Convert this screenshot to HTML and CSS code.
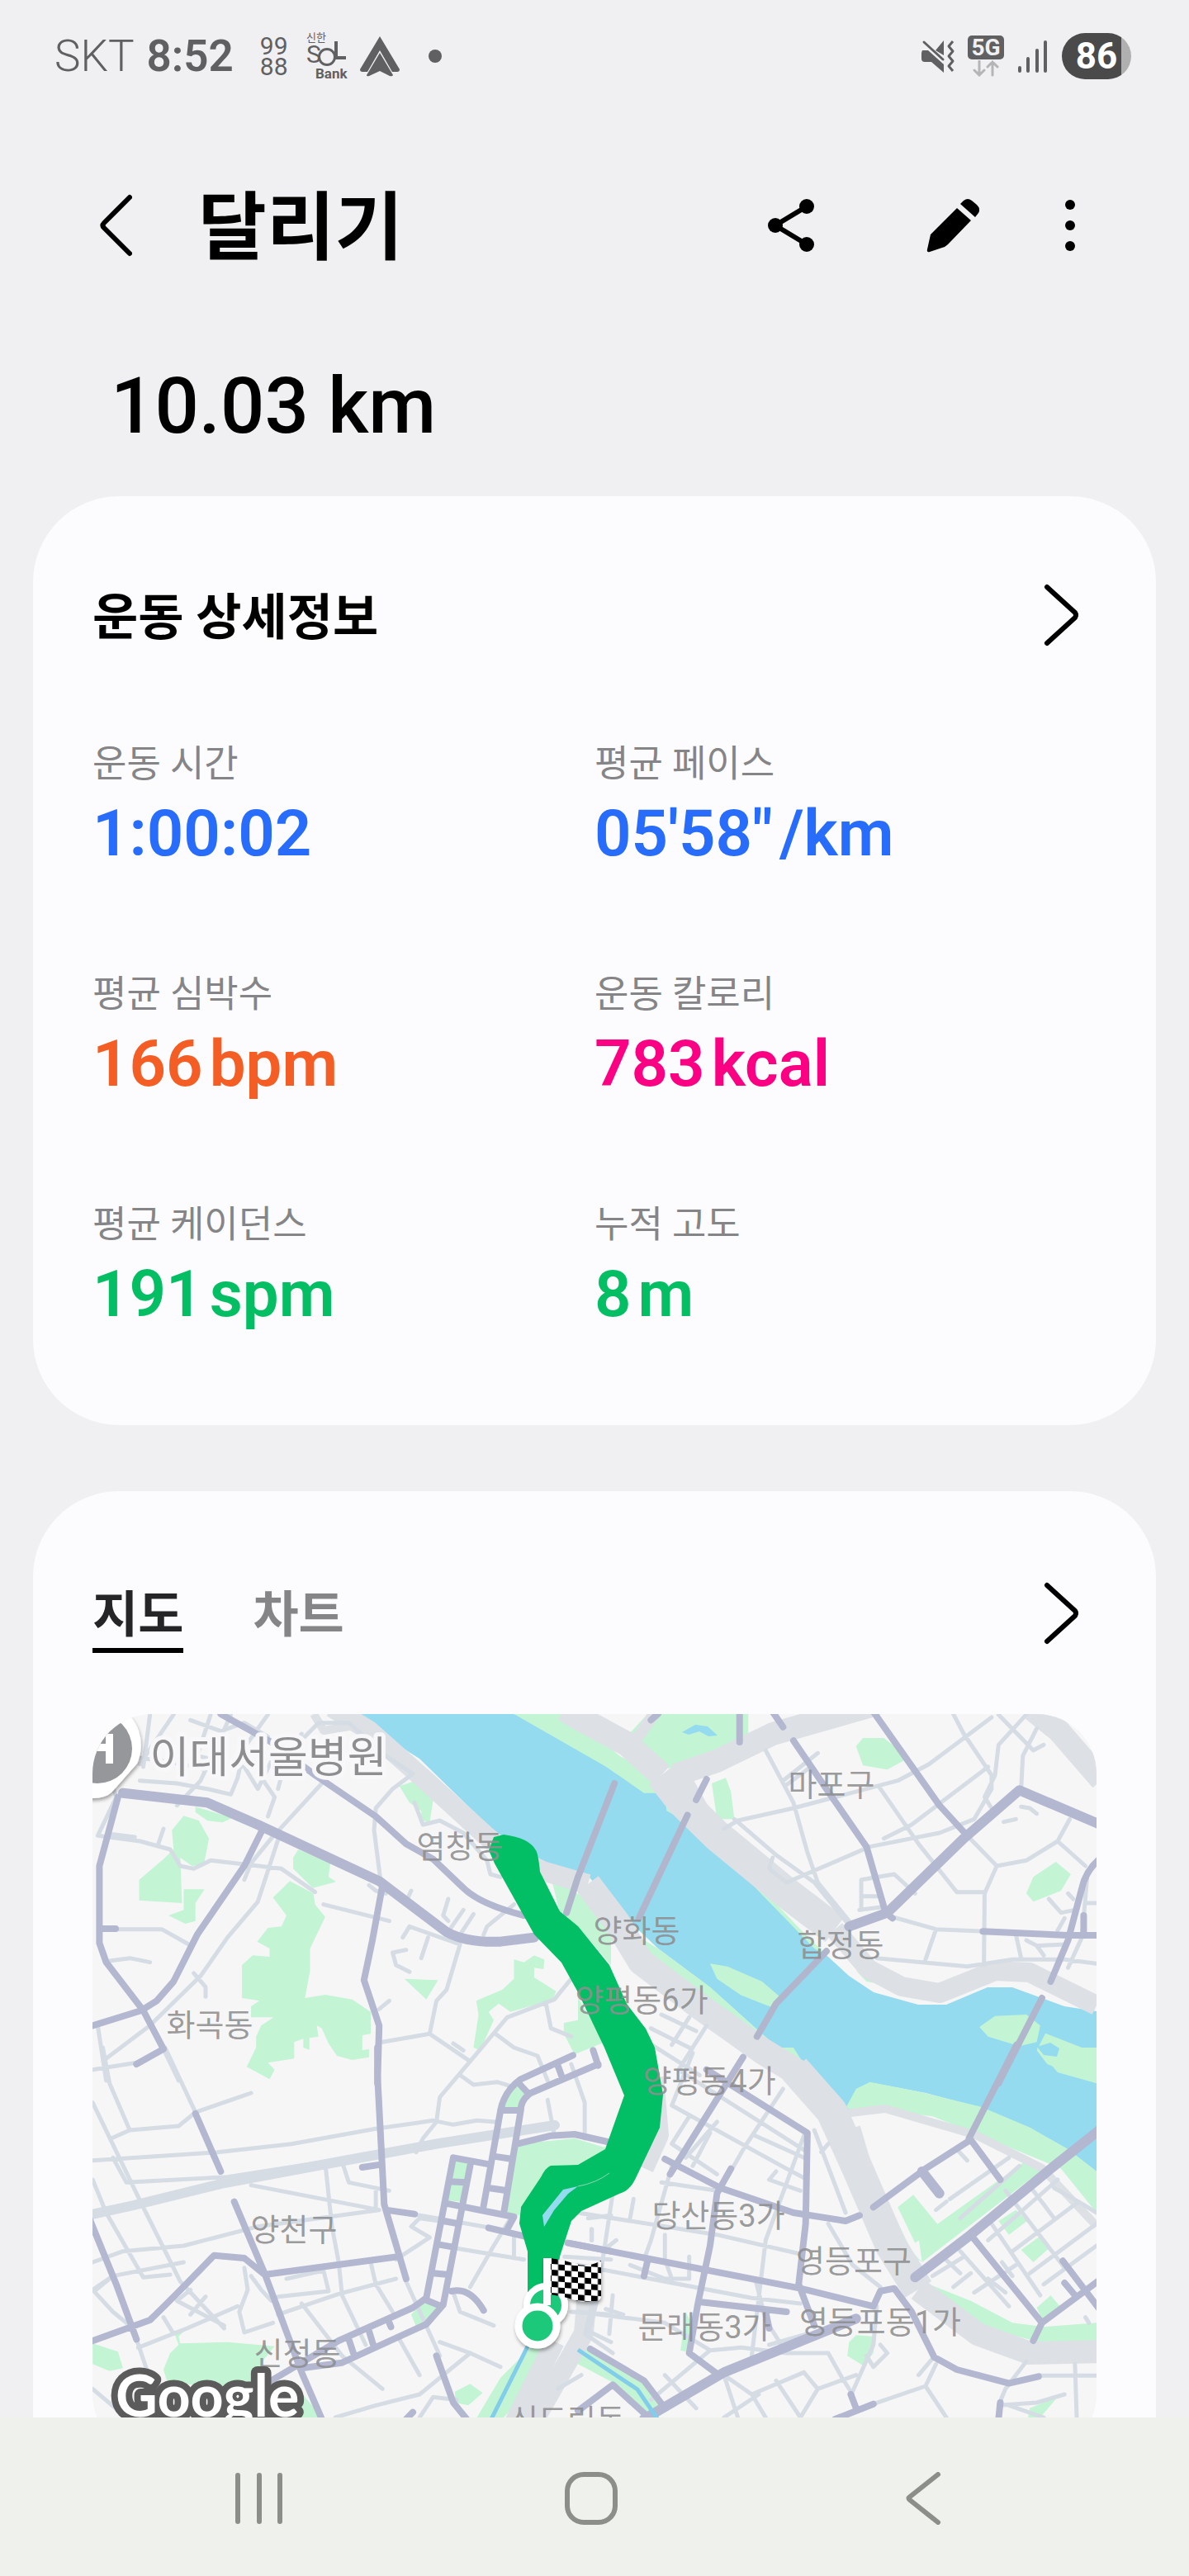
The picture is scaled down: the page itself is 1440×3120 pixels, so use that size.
FILE: index.html
```html
<!DOCTYPE html>
<html lang="ko">
<head>
<meta charset="utf-8">
<meta name="viewport" content="width=device-width, initial-scale=1">
<title>달리기</title>
<link rel="stylesheet" href="styles.css">
</head>
<body>
<div class="status">
  <div class="status-left">
    <span class="carrier">SKT</span>
    <span class="clock">8:52</span>
    <span class="app-9988"><span>99</span><span>88</span></span>
    <svg class="app-sol" width="54" height="64" viewBox="0 -2 54 64" aria-label="신한 SOL Bank">
      <text x="0" y="12" font-size="13">신한</text>
      <text x="0" y="38" font-size="30">S</text>
      <circle cx="25" cy="31" r="9.500" fill="none" stroke="currentColor" stroke-width="3"/>
      <path d="M36 12V32H48" fill="none" stroke="currentColor" stroke-width="4"/>
      <text x="11" y="57" font-size="17" font-weight="700">Bank</text>
    </svg>
    <svg class="app-nav" width="50" height="50" viewBox="0 0 50 50"><path d="M25 1 49 41Q49 44 46 44H40L25 18 10 44H4Q1 44 1 41Z" fill="currentColor"/><path d="M25 21 41 48Q40 50 37 49L25 43 12 49Q9 50 9 48Z" fill="currentColor"/></svg>
    <span class="dot"></span>
  </div>
  <div class="status-right">
    <svg width="40" height="40" viewBox="0 0 40 40"><path d="M1 13H8L27 30V40L12 27H4Q0 27 0 23V16ZM17 13 27 1V19Z" fill="currentColor"/><path d="M3 3 29 27" stroke="#f0f0f2" stroke-width="4"/><path d="M3 3 26 24" stroke="currentColor" stroke-width="3" stroke-linecap="round"/><path d="M38 2 33 8 38 14 33 20 38 26 33 32 38 38" fill="none" stroke="currentColor" stroke-width="3" stroke-linejoin="round"/></svg>
    <span class="network"><span class="network-tag">5G</span>
      <svg width="32" height="20" viewBox="0 0 32 20" fill="none" stroke="#b5b5b7" stroke-width="3" stroke-linecap="round"><path d="M8 1V18M2 12 8 18 14 12M24 18V2M18 8 24 2 30 8"/></svg></span>
    <svg width="38" height="40" viewBox="0 0 38 40" stroke="currentColor" stroke-width="4" stroke-linecap="round"><path d="M3 34V38M13 23V38M24 13V38M34 3V38"/></svg>
    <span class="battery">86</span>
  </div>
</div>

<header class="header">
  <button class="icon-button" aria-label="뒤로"><svg width="40" height="76" viewBox="0 0 40 76"><path d="M37 4 6 35Q3 38 6 41L37 72" class="line"/></svg></button>
  <h1>달리기</h1>
  <button class="icon-button share" aria-label="공유"><svg width="64" height="68" viewBox="0 0 64 68"><path d="M51 11 13 34 51 57" fill="none" stroke="#000" stroke-width="6"/><circle cx="51" cy="11" r="9"/><circle cx="13" cy="34" r="9"/><circle cx="51" cy="57" r="9"/></svg></button>
  <button class="icon-button edit" aria-label="편집"><svg width="64" height="68" viewBox="0 0 64 68"><path d="M37 13 54 28 26 57Q23 60 19 61L4 66Q0 67 1 63L5 45ZM41 8 45 4Q50 0 55 4L61 9Q66 14 63 19L59 24Z"/></svg></button>
  <button class="icon-button more" aria-label="더보기"><svg width="64" height="68" viewBox="0 0 64 68"><circle cx="32" cy="9" r="6"/><circle cx="32" cy="34" r="6"/><circle cx="32" cy="59" r="6"/></svg></button>
</header>

<main>
  <p class="distance">10.03 km</p>
  <section class="card details">
    <div class="card-head">
      <h2>운동 상세정보</h2>
      <button class="icon-button" aria-label="운동 상세정보 보기"><svg width="44" height="76" viewBox="0 0 44 76"><path d="M4 4 38 35Q40 38 38 41L4 72" class="line"/></svg></button>
    </div>
    <dl class="stats">
      <div><dt>운동 시간</dt><dd class="blue">1:00:02</dd></div>
      <div><dt>평균 페이스</dt><dd class="blue">05'58"<span class="unit">/km</span></dd></div>
      <div><dt>평균 심박수</dt><dd class="orange">166<span class="unit">bpm</span></dd></div>
      <div><dt>운동 칼로리</dt><dd class="pink">783<span class="unit">kcal</span></dd></div>
      <div><dt>평균 케이던스</dt><dd class="green">191<span class="unit">spm</span></dd></div>
      <div><dt>누적 고도</dt><dd class="green">8<span class="unit">m</span></dd></div>
    </dl>
  </section>

  <section class="card map-card">
    <div class="card-head">
      <div class="tabs" role="tablist">
        <button role="tab" aria-selected="true">지도</button>
        <button role="tab" aria-selected="false">차트</button>
      </div>
      <button class="icon-button" aria-label="지도 보기"><svg width="44" height="76" viewBox="0 0 44 76"><path d="M4 4 38 35Q40 38 38 41L4 72" class="line"/></svg></button>
    </div>
    <svg class="map" viewBox="0 0 1216 896" role="img" aria-label="달리기 경로 지도">
      <defs>
        <pattern id="checks" width="16" height="14" patternUnits="userSpaceOnUse" patternTransform="translate(556 659) skewY(4)"><rect width="16" height="14" fill="#fff"/><path d="M0 0H8V14H16V7H0Z" fill="#000"/></pattern>
        <filter id="shadow" x="-30%" y="-30%" width="160%" height="160%"><feDropShadow dx="1" dy="3" stdDeviation="2" flood-opacity=".35"/></filter>
      </defs>
      <rect width="1216" height="896" fill="#f6f6f7"/>
      <!-- Han river -->
      <path class="water" d="M310 0 396 54 478 134 539 181 601 197 643 244 685 284 748 331 807 384 878 447 916 480 946 447 1009 459 1076 477 1135 501 1181 527 1216 554V360L1177 354 1114 331H1084L1034 352H1000L946 337 916 317 891 294 857 264 790 197 714 131 693 97 634 72 588 39 560 15 510 0Z"/>
      <!-- parks -->
      <g class="park">
        <g transform="translate(-12 -16) scale(.40816 .33333)">
          <path d="M1280 48 1568 250V130L1460 48ZM940 310 1010 282 1045 325 1030 440 1005 435V400L970 370ZM335 385 445 425 415 442 370 435 335 405ZM300 418 345 435 375 500 360 595 325 600 290 570 295 735 168 725V650L240 575 270 540 265 470ZM300 685H362L335 735V800L305 810 255 780 300 760ZM640 540 735 590 730 640 752 658 683 680 625 610V570ZM615 655 685 700 690 740 720 785 675 900 675 980 660 1080 720 1068 800 1085 855 1130V1210L830 1215V1270L850 1265V1295L800 1305 755 1290 730 1245 710 1190 695 1180 700 1220 673 1225V1268L655 1260 655 1228 628 1240V1300L550 1315 570 1340 555 1375 487 1330 515 1260V1220L530 1180 567 1150 500 1150V1110L525 1090 473 1080V960L505 925 555 930V900L518 875 550 825 590 820 605 780 565 715ZM955 1010 1055 1015 1020 1085ZM1280 940 1310 950 1340 925 1370 940 1368 975 1340 970V1005L1405 1055 1395 1085 1270 1130 1235 1100 1205 1130 1220 1160 1180 1270 1160 1260 1175 1140 1168 1090 1245 1050 1280 1010ZM1390 640 1460 690 1568 840V960L1490 850 1415 765ZM1470 1080 1550 1240 1460 1285 1428 1210V1170L1470 1160Z"/>
        </g>
        <g transform="translate(588 -16) scale(.42092 .33333)">
          <path d="M-20 50 0 65 140 130 200 48H490V140L400 190 340 240 250 245 190 180 150 130 0 80V165L110 265 190 335 250 335 260 300 120 200ZM385 300 425 280 440 330 450 430 400 430ZM800 165 820 135H880L910 165 940 215 890 250 820 235ZM250 340 350 450 640 830 720 930 680 900 480 640 300 430 255 400ZM0 700 100 800 230 900 380 1040 520 1200 690 1380H650L450 1180 200 950 0 800ZM380 955 430 965 530 1020 585 1080 570 1120 470 1070 400 1010ZM1155 1185 1200 1145 1290 1140 1330 1180 1320 1240 1270 1255 1180 1220ZM1345 1208 1450 1260 1492 1300V1390L1350 1320 1320 1270ZM0 1120 60 1230 0 1270ZM1290 700 1310 640 1375 585 1418 630 1390 690 1310 730ZM800 980 870 1030 830 1020Z"/>
        </g>
        <g transform="translate(-12 404) scale(.40816 .33333)">
          <path d="M1280 130 1318 175 1295 230 1248 225ZM1095 410 1145 420 1125 560 1080 555ZM1290 350 1460 330 1568 370 1470 425 1390 430 1300 580 1297 610 1250 600ZM1015 920 1060 945 1010 1010 990 1015 975 970ZM30 1075 105 1105 120 1165 80 1175 30 1150ZM240 1170 260 1110 285 1080 270 1030 310 1020 285 1050 290 1075 430 1070 570 1085 540 1130 520 1180 560 1210 500 1240 400 1240 250 1210ZM640 1240 710 1344H600ZM1105 1250 1150 1222 1187 1255 1145 1300 1105 1290ZM1240 1200 1330 1090 1400 1090 1310 1260 1250 1344H1170Z"/>
        </g>
        <g transform="translate(588 404) scale(.42092 .33333)">
          <path d="M570 0H620L690 140 770 220 800 150 840 125 980 160 1160 215 1300 290 1410 370 1492 450V600L1390 440 1180 330 1020 250 860 225 800 240 700 160ZM1320 0 1400 30 1440 0H1492V130L1380 90ZM808 355 850 450 960 740 990 780 950 750 880 620 830 530ZM920 580 965 535 1040 650 970 710ZM980 690 1290 410 1340 440 990 780ZM1210 630 1260 590 1292 630 1240 680ZM1275 735 1330 685 1355 730 1310 780ZM990 850 1130 920 1250 1000 1340 1015 1492 1000V1075L1340 1075 1180 1020 1040 930ZM1320 945 1360 900 1390 945 1340 1000ZM780 1070 800 1045 855 1050 850 1110 820 1155 775 1120ZM310 960 330 1010 310 1105 295 1100ZM0 1080 40 1100 190 1220 245 1310 200 1330 120 1230 0 1150ZM1380 1270 1330 1344H1295L1300 1310ZM0 340 45 380 0 400Z"/>
        </g>
      </g>
      <path class="water" d="M714 22 730 13 745 15 757 26 746 27 735 21 722 25ZM1144 403 1160 398 1171 405 1168 415 1152 413Z"/>
      <!-- expressways -->
      <g class="express">
        <path stroke-width="30" d="M572-6 588 4 647 36 689 74"/>
        <path stroke-width="38" d="M689 74 714 106 756 147 841 217 899 261"/>
        <path stroke-width="24" d="M899 261 940 309 980 330 1026 338 1093 311 1135 313 1216 353"/>
        <path stroke-width="28" d="M706 74 756 57 824 24 950-12"/>
        <path stroke-width="14" d="M655 36 680 0M720 80 748 130"/>
        <path stroke-width="24" d="M290-8 335 20 404 81 498 167 545 190 600 206"/>
        <path stroke-width="32" d="M600 206 635 252 664 300 735 354 811 408 860 438"/>
        <path stroke-width="38" d="M850 430 895 481 925 547 967 644 1000 697"/>
        <path stroke-width="28" d="M1000 697 1072 751 1135 774 1230 772M1135-8 1170 20 1222 80"/>
        <path stroke-width="24" d="M680 440 686 510 668 550M600 690 595 750 510 900M560 760 490 900"/>
        <path stroke-width="10" d="M902 485 960 478 1070 510 1150 550 1216 620M925 500 960 620 1003 680M268 0 280 20 330 12"/>
      </g>
      <path d="M642 312 670 331 720 370 760 410 775 440 700 420 660 390Z" fill="#f6f6f7"/>
      <!-- streets -->
      <g class="street">
        <g transform="translate(-12 -16) scale(.40816 .33333)">
          <path d="M60 200 100 350 45 490 170 510 260 540 290 600 330 610 380 580 590 610 690 695M200 50 180 240M270 50 170 230M320 70 410 110 480 80 550 130M380 50 340 200 480 240 520 320 580 170M440 50 400 160 350 290 280 380M550 50 480 170 460 280 440 340 370 320 280 300 170 290M130 200 300 230 360 250M520 260 570 350 550 420M710 300 560 500 500 590 480 650M650 120 600 230 580 320M660 130 700 80 790 80 900 200 980 265 920 320 870 390 865 470 885 660M580 505 520 730 430 860 350 1000 200 1180 70 1300M985 370 1010 450 1060 435 1130 480 1200 580 1210 630 1240 640M715 740 910 800M80 945 140 935 200 950M100 830H235L315 885M330 990 365 1040V1075M240 465 225 520M90 485 155 495M1085 720 1070 780 1085 800M1130 760 1090 830M1160 775 1120 850M950 860 970 820 1120 885 1080 1050 1050 1090 1030 1210 890 1240M1025 860 1005 935M960 905 920 915 930 960 970 985M1190 850 1200 820 1280 740M910 1090 880 1120M1030 1210 1150 1310 1260 1150 1400 1085 1450 1010M1100 1245 1130 1270M1225 1210 1280 1260 1350 1290 1380 1380M1375 1100 1390 1190 1450 1220M45 1180 70 1380M240 1265 285 1380M30 1340 160 1315M850 670 870 690 900 700M975 690 960 730"/>
        </g>
        <g transform="translate(588 -16) scale(.42092 .33333)">
          <path d="M540 180 620 370 660 550 690 660 780 800M590 290 690 190M600 305 670 240M420 465 460 435 620 390 920 290 1010 230 1190 60M450 430 570 560 680 660 770 800M560 570 550 610 600 660 840 530 1040 480 1140 430 1190 320V270L1110 120 1080 48M880 500 960 450 1180 240M865 310 980 520 1090 695H1170M1210 50 1310 180 1340 160M1290 50 1210 160 1200 270 1170 350 1190 390M1320 100 1280 200 1275 320M1120 490 1205 600 1290 580 1380 510 1415 430M1380 510 1460 600M1205 600 1170 700 1168 960M815 760V650L910 630 970 700M820 710H870M810 760 870 750M890 780 1030 830 1170 838M1030 830 1000 940M860 935 1120 965 1250 940 1400 940 1492 955M1260 850 1275 935M1290 870 1320 890 1400 885M1320 890 1340 925M1400 790 1380 835M1355 720 1390 770 1430 760M1465 640 1450 860 1410 970M1225 440 1260 430M1275 385 1300 390 1320 410M1460 735H1492M1410 700 1425 720M210 1190 320 1260M240 1140 340 1200M370 1180 290 1340M200 1240 350 1360M320 1150 270 1250"/>
        </g>
        <g transform="translate(-12 404) scale(.40816 .33333)">
          <path d="M60 0 80 130 140 300 85 330M30 200 180 580 290 850 420 1020M30 480 70 600 180 835 260 825M30 410 400 380 620 350 870 295 1040 265 1100 280 1170 265 1225 270M90 400 130 490 430 470 720 415H770L790 490 910 520M335 235 500 165M140 300 285 285 335 235M245 0 335 235M720 420 740 650 760 780M500 500 880 590M30 780 120 740 300 720 520 650 880 590M1150 50 1060 180 1050 270 1010 330 990 380M1120 100 1160 135 1230 125 1270 140M870 510V590M980 605 1210 655M30 880 90 830 300 780M30 880 90 960 130 1000M40 880 80 840M165 1090 310 1020 460 940M480 800 490 880 465 960 480 1035 565 1000M500 830 530 880 560 920M580 905 730 885 715 810 605 840M650 930 770 1120 890 1240M580 970 760 895 930 840M760 780 770 900 840 1080M855 780 870 860 920 960M930 770 1030 690 975 650 1000 620 1120 640M1110 730 1310 770M1270 620 1220 720 1150 870M1280 690V765M240 980 270 1040M320 880 280 920 420 1010M365 905 320 970M160 1060 210 1240M960 850 1060 1120M1150 1110 1000 1260 870 1300 750 1344M1060 1070 1150 1110 1240 1160M940 1060 1000 1190M1000 1344 1040 1270 1110 1280M30 1240 130 1344M1380 190 1400 320M1450 60 1490 200V330M1500 620 1568 610M1430 760 1568 770M1450 960 1568 970M1510 660V700M1500 1050 1530 900M1500 1030 1568 1070M1100 890 1120 960 1220 1010M1410 1240 1480 1190"/>
        </g>
        <g transform="translate(588 404) scale(.42092 .33333)">
          <path d="M270 210 600 440 660 480M300 90 660 380M590 150 480 360 430 470M510 320 650 400M330 20 270 210M320 250 270 350 400 460M380 310 330 430M650 320 540 700 500 1120M680 300 770 600M700 380 720 350M400 270 310 400M570 450 550 480 640 520M240 490 400 520M270 430 210 700 190 770M160 550 150 620M40 660V700M0 600 400 680 640 750M100 530 70 780 20 1040 100 1110M0 790 500 910 640 930M70 740 110 700M150 790 250 840H320V760M0 960 250 1000 380 1100 470 1090 600 1110M100 900 90 1040M80 950 130 970M250 680V770L270 840M510 840 540 990 600 1110 720 1110 760 1200 790 1260M720 640 790 790 870 870M650 1180 690 1240 800 1190M650 1180 500 1260 420 1190M570 1210 640 1344M690 1240 640 1344M500 1260 540 1344M860 940 850 1080 790 1250M870 1080 890 1110 850 1160 830 1120M550 1080 660 1040M380 1100 210 1280M250 1190 340 1310M420 1190 460 1344M420 1344 520 1260M850 1295 1000 1230 1060 1344M1000 1230 1030 1150M1020 1130 980 1190M1290 1140 1230 1240 1210 1300 1320 1290 1400 1260M1430 1150 1435 1344M1325 1192H1492M1240 1300 1340 1344M1070 550 1240 400M1100 620 1270 430M1030 590 1060 560M1180 700 1380 480M1250 740 1440 560 1492 600M1300 820 1492 640M1340 860 1492 720M1140 890 1260 790M1080 870 1130 820M1100 740 1240 940M1020 830 1110 760M1230 520 1400 800M1310 520 1370 620M1370 510 1440 560M1190 640 1330 900M1050 760 1100 820M1180 840 1230 890M1220 780 1250 830M1090 370 1120 410M1460 980 1470 1000"/>
        </g>
      </g>
      <g class="boulevard">
        <path d="M-10 608 50 595 160 568 310 540 420 520 560 498"/>
      </g>
      <!-- main roads -->
      <g class="road">
        <g transform="translate(588 -16) scale(.42092 .33333)" class="bridge">
          <path d="M105 300 0 640-33 770M315 415 175 790M715 910 570 1100 515 1220M1335 1080 1210 1390"/>
        </g>
        <g transform="translate(-12 -16) scale(.40816 .33333)">
          <path d="M410 48 560 150 690 270 870 420 960 520 1040 575 1130 680Q1180 740 1310 780M105 350 50 600V880L70 950 180 1125 240 1265 160 1320M890 670 860 870 835 1015 880 1180 875 1390M535 465 480 600 340 850 270 1020 220 1090 175 1125 30 1180M60 828H98"/>
          <path class="wide" d="M120 335 370 370 520 450 880 655 1080 840Q1140 880 1240 875L1340 860"/>
        </g>
        <g transform="translate(588 -16) scale(.42092 .33333)">
          <path d="M560 40 590 95M620 145 720 330 830 530 885 770 905 790M850 40 1040 380 1120 490M1165 838 1410 852H1500M1500 575Q1460 620 1450 680L1410 870 1360 1020M1455 780V850M465 40V150M370 285 340 360M230 48 210 70"/>
          <path class="wide" d="M780 820 890 770 1110 500 1270 325 1500 448"/>
        </g>
        <g transform="translate(-12 404) scale(.40816 .33333)">
          <path d="M335 240 410 450M450 560 540 820 650 1180 710 1350M875 0 875 100 895 570 960 840M830 435 885 425M900 590 985 605M20 620 100 860 160 1060M20 1070 200 990Q260 920 390 755L480 765 540 825 935 760M1455 28 1300 115Q1250 160 1240 230L1190 575M1530 60 1330 165Q1300 190 1300 230L1250 600M1240 228H1300M1220 395 1275 405M1205 510 1260 520M1410 65 1425 115M1515 10 1530 65M1290 350 1390 320 1460 315 1568 345M1210 425 1100 400 1020 910 980 945 760 1065 560 1210M1150 430 1070 935 1020 1005 770 1145 650 1165M1090 487 1135 490M1075 565 1280 615 1260 660M1070 630 1115 640M1055 715 1100 725M1040 820 1085 825M1015 915 1065 940M850 1030 865 1090M790 1060 805 1115M910 1000 915 1015M1095 885Q1150 870 1190 955M1205 655 1310 685M1440 710 1568 740M1050 1120 1100 1290 1140 1350M1295 130 1325 170M980 1325 960 1350"/>
        </g>
        <g transform="translate(588 404) scale(.42092 .33333)">
          <path class="bridge" d="M1262-10 1125 330"/>
          <path d="M-20 712 640 875 850 940M475 35 265 460M370 80 660 310 655 640 635 860 680 1010M250 405 410 510 620 600 770 630 810 610M440 440 400 530 380 720 345 930 320 1110 400 1185M200 775 190 830M355 925 600 960M35 1095 190 1210 250 1310M0 1320 100 1225 200 1340M850 580 1000 440 1130 335 1215 480M1130 680 1335 1000 1310 1065M1335 1000 1500 845M1395 775 1500 950M1400 855 1430 900M850 940 870 885 910 875 960 960 1025 1125 1090 1170 1240 1220 1325 1195M1215 1290 1210 1350M740 1350 850 1295M785 1260 800 1310M540 960 550 1020"/>
          <path class="wide" d="M190 1350 420 1180 800 985M970 835 1130 680 1370 430 1500 300M990 450 1040 530"/>
        </g>
      </g>
      <path d="M588 770 660 818 690 862M535 750 515 790 480 860" fill="none" stroke="#82cdea" stroke-width="5"/>
      <!-- running track -->
      <path fill="#02be64" d="M486 149 498 146Q529 150 537 165 540 170 542 191L566 239 588 257 626 304 647 351 670 381 681 404 691 461 687 501 657 564Q650 578 638 581L592 602 580 614 566 657 559 700H527V651L517 617 519 597 543 561Q549 549 555 547L588 546 621 527 644 462 620 404 588 337 568 301 535 267 487 181 480 165Z"/>
      <path fill="#94dbf0" d="M588 572 570 576 545 607 547 621 559 601 576 581Z"/>
      <path d="M588 572Q610 568 626 556" fill="none" stroke="#8fd8b5" stroke-width="1"/>
      <g class="labels">
        <text x="445" y="174">염창동</text><text x="142" y="390">화곡동</text><text x="895" y="99">마포구</text><text x="659" y="276">양화동</text><text x="906" y="293">합정동</text><text x="665" y="360">양평동6가</text><text x="747" y="458">양평동4가</text><text x="758" y="621">당산동3가</text><text x="922" y="676">영등포구</text><text x="741" y="756">문래동3가</text><text x="954" y="750">영등포동1가</text><text x="244" y="638">양천구</text><text x="248" y="788">신정동</text><text x="575" y="869">신도림동</text>
      </g>
      <g filter="url(#shadow)"><path fill="#fff" d="M-20-10H30A54 54 0 0 1 54 60L24 94Q16 102 0 102H-20Z"/></g>
      <circle cx="6" cy="42" r="42" fill="#95979b"/><path d="M-10 36H16V24H25V60H16V45H-10Z" fill="#fff"/>
      <text class="hospital" x="213" y="71">이대서울병원</text>
      <g filter="url(#shadow)">
        <circle cx="549" cy="716" r="23" fill="#1fc97a" stroke="#fff" stroke-width="8"/>
        <path d="M546 659H555V716H546Z" fill="#fff"/>
        <path d="M555 659Q570 661 585 666T616 662V704Q616 712 606 711 590 713 575 707L555 703Z" fill="url(#checks)"/>
        <circle cx="539" cy="741" r="23" fill="#1fc97a" stroke="#fff" stroke-width="9"/>
      </g>
      <text class="google" x="28" y="851">Google</text>
    </svg>
  </section>
</main>

<nav class="system-nav" aria-label="시스템">
  <button class="icon-button" aria-label="최근 앱"><svg width="64" height="64" viewBox="0 0 64 64"><path d="M6 4V60M32 4V60M57 4V60" class="nav-line"/></svg></button>
  <button class="icon-button" aria-label="홈"><svg width="64" height="64" viewBox="0 0 64 64"><rect x="3" y="3" width="58" height="58" rx="20" class="nav-line"/></svg></button>
  <button class="icon-button" aria-label="이전"><svg width="64" height="64" viewBox="0 0 64 64"><path d="M50 3 16 30Q13 32 16 34L50 61" class="nav-line"/></svg></button>
</nav>
</body>
</html>
```

FILE: styles.css
```css
* { box-sizing: border-box; }
body {
  margin: 0;
  height: 100vh;
  display: flex;
  flex-direction: column;
  overflow: hidden;
  background: #f0f0f2;
  color: #000;
  font-family: Roboto, "Noto Sans CJK KR", sans-serif;
}
h1, h2, p, dl, dd { margin: 0; }
button { border: 0; padding: 0; background: none; font: inherit; color: inherit; }
svg { display: block; flex: none; }
.icon-button { display: flex; align-items: center; justify-content: center; }
.line { fill: none; stroke: #000; stroke-width: 6; stroke-linecap: round; stroke-linejoin: round; }

.status {
  flex: none;
  display: flex;
  justify-content: space-between;
  align-items: center;
  height: 136px;
  padding: 0 70px 0 66px;
  color: #606062;
}
.status-left, .status-right { display: flex; align-items: center; }
.carrier, .clock { font-size: 53px; line-height: 60px; }
.carrier { font-weight: 300; margin-right: 15px; }
.clock { font-weight: 600; margin-right: 32px; }
.app-9988 { display: flex; flex-direction: column; font-size: 30px; line-height: 25px; margin-right: 22px; }
.app-sol { fill: currentColor; margin-right: 10px; }
.app-nav { margin-right: 34px; }
.dot { width: 16px; height: 16px; border-radius: 50%; background: #606062; }
.status-right { gap: 16px; }
.network { display: flex; flex-direction: column; align-items: center; gap: 1px; }
.network-tag {
  width: 44px;
  border-radius: 5px;
  background: #606062;
  color: #f0f0f2;
  font-size: 28px;
  font-weight: 700;
  line-height: 29px;
  text-align: center;
}
.battery {
  width: 84px;
  border-radius: 28px;
  background: linear-gradient(90deg, #4a4a4a 72px, #b0b0b0 72px);
  color: #fff;
  font-size: 44px;
  font-weight: 700;
  line-height: 56px;
  text-align: center;
}

.header {
  flex: none;
  display: flex;
  align-items: center;
  height: 274px;
  padding: 0 112px 0 120px;
}
.header h1 { flex: 1; margin-left: 80px; padding-top: 8px; font-size: 90px; line-height: 112px; font-weight: 700; }
.share { margin-right: 132px; }
.edit { margin-right: 78px; }

main { flex: 1; min-height: 0; overflow: hidden; }
.distance { padding: 26px 134px 53px; font-size: 94px; line-height: 112px; font-weight: 500; }

.card { margin: 0 40px 80px; padding: 0 72px; border-radius: 104px; background: #fcfcfe; }
.card-head { display: flex; align-items: center; justify-content: space-between; padding-right: 20px; }
.details { padding-top: 96px; padding-bottom: 107px; }
.card-head h2 { padding-top: 8px; font-size: 60px; line-height: 88px; font-weight: 700; }
.stats { display: grid; grid-template-columns: 1fr 1fr; gap: 111px 0; padding-top: 100px; }
dt { color: #858587; font-size: 45px; line-height: 66px; }
dd { font-size: 78px; line-height: 102px; font-weight: 600; }
.unit { margin-left: 8px; }
.blue { color: #276cfb; }
.orange { color: #f45e24; }
.pink { color: #fb0082; }
.green { color: #04be64; }

.map-card { padding-top: 100px; padding-bottom: 72px; }
.tabs { display: flex; gap: 84px; }
.tabs button { padding-top: 12px; border-bottom: 6px solid transparent; font-size: 60px; line-height: 78px; font-weight: 700; color: #858587; }
.tabs button[aria-selected="true"] { border-color: #000; color: #252527; }
.map { width: 100%; height: auto; margin-top: 74px; border-radius: 72px; overflow: hidden; }
.water { fill: #94dbf0; }
.park { fill: #c3f4d4; }
.express, .street, .boulevard, .road { fill: none; stroke-linejoin: round; stroke-linecap: round; }
.express { stroke: #dde1e5; }
.express path { stroke-linecap: butt; }
.street { stroke: #d5dce4; }
.boulevard { stroke: #d5dce4; stroke-width: 12; }
.road { stroke: #b3b7d0; }
.street path, .road path { vector-effect: non-scaling-stroke; }
.street path { stroke-width: 5; }
.road path { stroke-width: 8; }
.road .wide { stroke-width: 12; }
.bridge { stroke: #b2b6cd; }
.labels, .hospital { fill: #8e8e90; text-anchor: middle; }
.labels { font-size: 38px; fill-opacity: .9; }
.hospital { font-size: 52px; stroke: #f8f8fa; stroke-width: 10; paint-order: stroke; stroke-linejoin: round; }
.google { font: 700 70px Lato, sans-serif; fill: #fff; stroke: #5b5b5b; stroke-width: 16; stroke-linejoin: round; paint-order: stroke; }

.system-nav {
  flex: none;
  display: grid;
  grid-template-columns: repeat(3, 1fr);
  height: 192px;
  padding: 4px 121px 0 113px;
  background: #eff1ed;
}
.nav-line { fill: none; stroke: #8c8e89; stroke-width: 6; stroke-linecap: round; stroke-linejoin: round; }
```
